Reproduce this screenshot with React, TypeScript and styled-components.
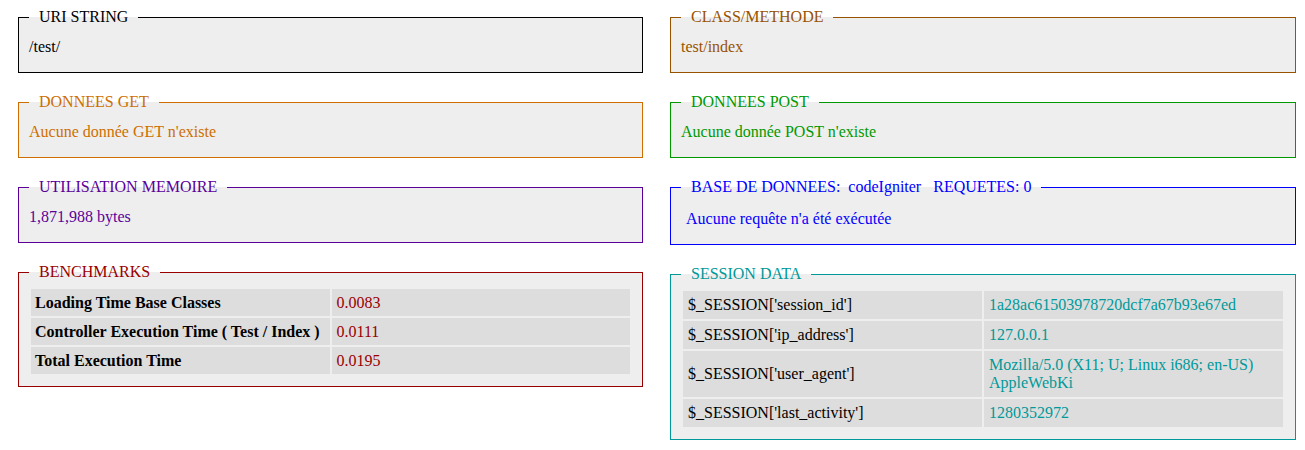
import React from 'react';
import styled, { createGlobalStyle } from 'styled-components';

const GlobalStyle = createGlobalStyle`
  body {
    margin: 8px;
    background: #fff;
    font-family: "Liberation Serif", "Times New Roman", serif;
    font-size: 16px;
  }
`;

const Columns = styled.div`
  display: grid;
  grid-template-columns: 625px 626px;
  column-gap: 27px;
  padding-left: 10px;
  align-items: start;
`;

const Column = styled.div`
  display: flex;
  flex-direction: column;
`;

const Box = styled.fieldset<{ $color: string }>`
  border: 1px solid ${(p) => p.$color};
  background-color: #eee;
  padding: 6px 10px 10px 10px;
  margin: 0 0 20px 0;
  min-inline-size: 0;
`;

const Legend = styled.legend<{ $color: string }>`
  color: ${(p) => p.$color};
  padding: 0 2px;
  white-space: pre;
`;

const Text = styled.div<{ $color: string }>`
  color: ${(p) => p.$color};
  padding: 6px 0;
`;

const QueryText = styled.div`
  color: #0000ff;
  padding: 8px 0 6px 5px;
`;

const Table = styled.table`
  width: 100%;
  border-spacing: 2px;
`;

const Key = styled.td<{ $bold?: boolean }>`
  width: 50%;
  padding: ${(p) => (p.$bold ? '5px 5px 4px 4px' : '5px')};
  color: #000;
  font-weight: ${(p) => (p.$bold ? 'bold' : 'normal')};
  background-color: #ddd;
`;

const Value = styled.td<{ $color: string; $tight?: boolean }>`
  width: 50%;
  padding: ${(p) => (p.$tight ? '5px 5px 4px' : '5px')};
  color: ${(p) => p.$color};
  background-color: #ddd;
`;

const nb = '\u00a0\u00a0';

const benchmarks = [
  ['Loading Time Base Classes', '0.0083'],
  ['Controller Execution Time ( Test / Index )', '0.0111'],
  ['Total Execution Time', '0.0195'],
];

const session = [
  ["$_SESSION['session_id']", '1a28ac61503978720dcf7a67b93e67ed'],
  ["$_SESSION['ip_address']", '127.0.0.1'],
  ["$_SESSION['user_agent']", 'Mozilla/5.0 (X11; U; Linux i686; en-US) AppleWebKi'],
  ["$_SESSION['last_activity']", '1280352972'],
];

const App: React.FC = () => {
  return (
    <>
      <GlobalStyle />
      <Columns>
        <Column>
          <Box $color="#000">
            <Legend $color="#000">{nb}URI STRING{nb}</Legend>
            <Text $color="#000">/test/</Text>
          </Box>
          <Box $color="#cd6e00">
            <Legend $color="#cd6e00">{nb}DONNEES GET{nb}</Legend>
            <Text $color="#cd6e00">Aucune donnée GET n'existe</Text>
          </Box>
          <Box $color="#5a0099">
            <Legend $color="#5a0099">{nb}UTILISATION MEMOIRE{nb}</Legend>
            <Text $color="#5a0099">1,871,988 bytes</Text>
          </Box>
          <Box $color="#990000">
            <Legend $color="#990000">{nb}BENCHMARKS{nb}</Legend>
            <Table>
              <tbody>
                {benchmarks.map(([k, v]) => (
                  <tr key={k}>
                    <Key $bold>{k}</Key>
                    <Value $color="#990000" $tight>{v}</Value>
                  </tr>
                ))}
              </tbody>
            </Table>
          </Box>
        </Column>
        <Column>
          <Box $color="#995300">
            <Legend $color="#995300">{nb}CLASS/METHODE{nb}</Legend>
            <Text $color="#995300">test/index</Text>
          </Box>
          <Box $color="#009900">
            <Legend $color="#009900">{nb}DONNEES POST{nb}</Legend>
            <Text $color="#009900">Aucune donnée POST n'existe</Text>
          </Box>
          <Box $color="#0000ff">
            <Legend $color="#0000ff">
              {nb}BASE DE DONNEES:{'\u00a0'} codeIgniter{'\u00a0\u00a0\u00a0'}REQUETES: 0{nb}
            </Legend>
            <QueryText>Aucune requête n'a été exécutée</QueryText>
          </Box>
          <Box $color="#009999">
            <Legend $color="#009999">{nb}SESSION DATA{nb}</Legend>
            <Table>
              <tbody>
                {session.map(([k, v]) => (
                  <tr key={k}>
                    <Key>{k}{nb}</Key>
                    <Value $color="#009999">{v}</Value>
                  </tr>
                ))}
              </tbody>
            </Table>
          </Box>
        </Column>
      </Columns>
    </>
  );
};

export default App;
